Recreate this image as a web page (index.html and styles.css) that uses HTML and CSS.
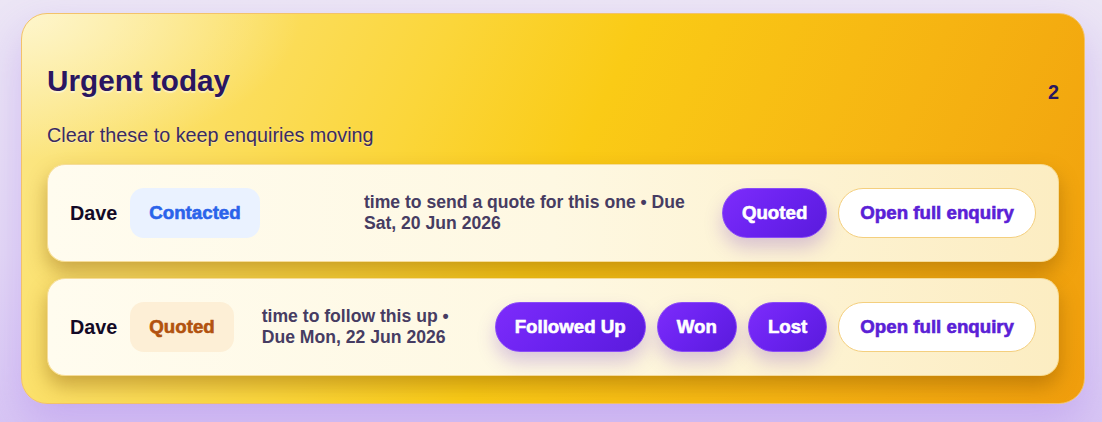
FILE: index.html
```html
<!DOCTYPE html>
<html lang="en">
<head>
  <meta charset="UTF-8" />
  <meta name="viewport" content="width=device-width, initial-scale=1.0" />
  <title>Urgent today</title>
  <link rel="stylesheet" href="styles.css">
</head>
<body>
  <section class="urgent-card">
    <div class="urgent-head">
      <h2>Urgent today</h2>
      <span class="urgent-count">2</span>
    </div>
    <p class="urgent-sub">Clear these to keep enquiries moving</p>

    <div class="urgent-list">
      <div class="enquiry-row">
        <div class="who">
          <span class="who-name">Dave</span>
          <span class="badge badge-contacted">Contacted</span>
        </div>
        <div class="meta">time to send a quote for this one • Due Sat, 20 Jun 2026</div>
        <div class="actions">
          <button class="pill-btn">Quoted</button>
          <button class="open-btn">Open full enquiry</button>
        </div>
      </div>

      <div class="enquiry-row">
        <div class="who">
          <span class="who-name">Dave</span>
          <span class="badge badge-quoted">Quoted</span>
        </div>
        <div class="meta">time to follow this up • Due Mon, 22 Jun 2026</div>
        <div class="actions">
          <button class="pill-btn">Followed Up</button>
          <button class="pill-btn">Won</button>
          <button class="pill-btn">Lost</button>
          <button class="open-btn">Open full enquiry</button>
        </div>
      </div>
    </div>
  </section>
</body>
</html>
```

FILE: styles.css
```css
body { margin: 0; padding: 13px 17px 0 21px; height: 422px; box-sizing: border-box;
  font-family: "Liberation Sans", Arial, sans-serif; color: #2a1660;
  background: linear-gradient(180deg, #ece6f5 0%, #e3d8f5 60%, #d8c6f4 100%); overflow: hidden; }

.urgent-card { border: 1px solid #f3c26a; border-radius: 26px; padding: 50px 25px 27px;
  background:
    radial-gradient(ellipse 35% 50% at 0% 0%, rgba(255, 250, 225, 0.75), rgba(255, 250, 225, 0) 75%),
    linear-gradient(115deg, #fbe88e 0%, #fbd63a 35%, #facb16 50%, #f6b412 75%, #f09d0c 100%);
  box-shadow: 0 18px 40px rgba(150, 100, 230, 0.28); }

.urgent-head { display: flex; justify-content: space-between; align-items: flex-start; }
.urgent-head h2 { margin: 0; font-size: 29.7px; font-weight: 700; color: #2a1660;
  text-shadow: 0 2px 1px rgba(255, 255, 255, 0.45); }
.urgent-count { margin-top: 17px; font-size: 19.8px; font-weight: 700; color: #2a1660; }
.urgent-sub { margin: 20px 0 17px; font-size: 19.8px; color: #3a2a62;
  text-shadow: 0 1px 1px rgba(255, 255, 255, 0.4); }

.urgent-list { display: flex; flex-direction: column; gap: 16px; }
.enquiry-row { display: flex; align-items: center; gap: 28px; padding: 23px 22px;
  border: 1px solid #f6dc98; border-radius: 18px;
  background: linear-gradient(90deg, #fffcef 0%, #fef8e2 50%, #fcedc2 100%);
  box-shadow: 0 10px 20px rgba(120, 70, 0, 0.38); }

.who { display: flex; align-items: center; gap: 13px; flex-shrink: 0; }
.who-name { font-size: 19.8px; font-weight: 700; color: #130a26; }
.badge { padding: 14px 19px; line-height: 22px; border-radius: 14px; font-size: 18.7px; font-weight: 700;
  -webkit-text-stroke: 0.6px currentColor; }
.badge-contacted { background: #eaf2ff; color: #2a63ea; }
.badge-quoted { background: #fdefd6; color: #b2520f; }

.meta { flex: 0 1 auto; max-width: 330px; margin-left: auto; font-size: 17.6px; font-weight: 700;
  line-height: 21px; color: #463c62; }

.actions { display: flex; align-items: center; gap: 11px; flex-shrink: 0; }
.pill-btn, .open-btn { font-family: "Liberation Sans", Arial, sans-serif; font-size: 18.7px; font-weight: 700;
  line-height: 22px; padding: 13px 19px; border-radius: 999px; cursor: pointer;
  -webkit-text-stroke: 0.6px currentColor; white-space: nowrap; }
.pill-btn { color: #fff; border: 1px solid #8a4cf7;
  background: linear-gradient(135deg, #7d2cfb 0%, #6a22ef 50%, #5a1bdc 100%);
  box-shadow: 0 10px 18px rgba(110, 50, 200, 0.25); }
.open-btn { color: #5a20d6; background: #fff; border: 1px solid #f4cf7e; padding: 13px 21px; }
```
